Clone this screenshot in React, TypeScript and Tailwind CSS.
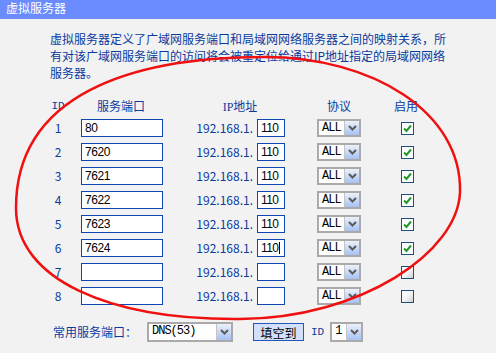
import React from "react";

const rows = [
  { id: "1", port: "80", ip: "110", on: true },
  { id: "2", port: "7620", ip: "110", on: true },
  { id: "3", port: "7621", ip: "110", on: true },
  { id: "4", port: "7622", ip: "110", on: true },
  { id: "5", port: "7623", ip: "110", on: true },
  { id: "6", port: "7624", ip: "110", on: true, cursor: true },
  { id: "7", port: "", ip: "", on: false },
  { id: "8", port: "", ip: "", on: false },
];

const Chevron = () => (
  <svg width="9" height="6" viewBox="0 0 9 6">
    <path d="M1 1 L4.5 4.5 L8 1" fill="none" stroke="#5a5a5a" strokeWidth="2" />
  </svg>
);

const Select = ({ value, w, h = 18 }: { value: string; w: string; h?: number }) => (
  <div
    className={`flex ${w} ${h === 20 ? "h-[20px]" : "h-[18px]"} border-2 border-[#aaaaaa] bg-white`}
  >
    <div className="flex-1 overflow-hidden pl-[3px] font-['Liberation_Mono',monospace] text-[12px] leading-[15px] tracking-[-1px] text-black">
      {value}
    </div>
    <div className="flex w-[15px] items-center justify-center border-l border-[#c4c4c4] bg-linear-to-b from-[#eef1f7] to-[#a7c1f4]">
      <Chevron />
    </div>
  </div>
);

const Checkbox = ({ on }: { on: boolean }) => (
  <div
    className={`flex h-[13px] w-[13px] items-center justify-center border border-[#1d4f7c] ${
      on ? "bg-white" : "bg-linear-to-br from-white via-[#f4f4f4] to-[#cfcfcf]"
    }`}
  >
    {on && (
      <svg width="11" height="11" viewBox="0 0 11 11">
        <path d="M2 5.5 L4.5 8 L9 2.5" fill="none" stroke="#1c9a2c" strokeWidth="2" />
      </svg>
    )}
  </div>
);

export default function App() {
  return (
    <div className="relative h-[353px] w-[496px] overflow-hidden bg-[#f2f2f2] font-['Noto_Sans_CJK_SC',sans-serif] text-[#0a3a9e]">
      {/* title bar */}
      <div className="h-[19px] bg-[#6b8cfe] pl-[6px] text-[12px] leading-[15px] text-white">虚拟服务器</div>

      {/* description */}
      <div className="ml-[50px] mt-[11px] text-[12px] leading-[17px] whitespace-nowrap">
        <div>虚拟服务器定义了广域网服务端口和局域网网络服务器之间的映射关系，所</div>
        <div>有对该广域网服务端口的访问将会被重定位给通过IP地址指定的局域网网络</div>
        <div>服务器。</div>
      </div>

      {/* header */}
      <div className="mt-[15px] flex h-[20px] items-center text-[12px]">
        <div className="ml-[44px] w-[28px] text-center font-['Liberation_Mono',monospace] text-[11px]">ID</div>
        <div className="w-[98px] text-center">服务端口</div>
        <div className="w-[140px] text-center">
          <span className="font-['Liberation_Serif',serif] text-[12px]">IP</span>地址
        </div>
        <div className="w-[58px] text-center">协议</div>
        <div className="w-[76px] text-center">启用</div>
      </div>

      {/* rows */}
      <div className="flex flex-col">
        {rows.map((r) => (
          <div key={r.id} className="flex h-[24px] items-center text-[12px]">
            <div className="ml-[44px] w-[28px] text-center">{r.id}</div>
            <div className="w-[91px] pl-[9px]">
              <div className="h-[18px] w-[82px] border border-[#1046b4] bg-white pl-[3px] font-['Liberation_Sans',sans-serif] text-[12px] leading-[16px] tracking-[-0.4px] text-black">
                {r.port}
              </div>
            </div>
            <div className="flex w-[122px] items-center justify-end">
              <span>192.168.1.</span>
              <div className="ml-[4px] flex h-[18px] w-[28px] items-center border border-[#1046b4] bg-white pl-[3px] font-['Liberation_Sans',sans-serif] text-[12px] leading-[16px] tracking-[-0.6px] text-black">
                {r.ip}
                {r.cursor && <span className="ml-[1px] h-[12px] w-[1px] bg-black" />}
              </div>
            </div>
            <div className="ml-[32px]">
              <Select value="ALL" w="w-[44px]" />
            </div>
            <div className="ml-[40px]">
              <Checkbox on={r.on} />
            </div>
          </div>
        ))}
      </div>

      {/* common service ports */}
      <div className="mt-[12px] flex h-[24px] items-center text-[12px]">
        <div className="ml-[53px] w-[94px]">常用服务端口：</div>
        <Select value="DNS(53)" w="w-[86px]" h={20} />
        <button className="ml-[20px] h-[18px] w-[51px] border border-[#2458b8] bg-[#d3e0fb] text-[12px] leading-[15px] text-black">
          填空到
        </button>
        <div className="ml-[7px] font-['Liberation_Mono',monospace] text-[11px]">ID</div>
        <div className="ml-[6px]">
          <Select value="1" w="w-[33px]" h={20} />
        </div>
      </div>

      {/* red annotation circle */}
      <svg className="pointer-events-none absolute left-0 top-0" width="496" height="353">
        <path
          d="M16 208 C16 95 130 57 265 57 C372 57 462 112 460 192 C458 252 362 318 240 319 C110 320 16 280 16 208 Z"
          fill="none"
          stroke="#f01010"
          strokeWidth="2.5"
        />
      </svg>
    </div>
  );
}
